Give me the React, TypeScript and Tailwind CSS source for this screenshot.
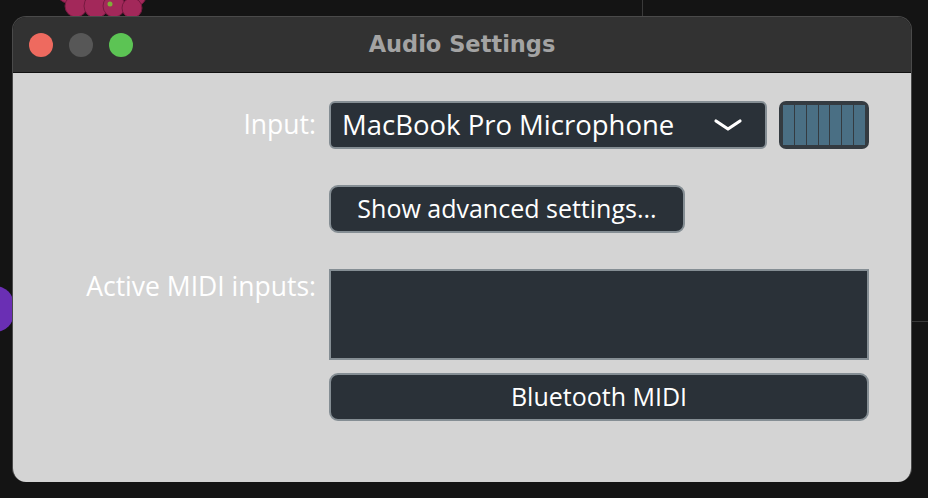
import React from 'react';

const labelFont = { fontFamily: '"Open Sans", "DejaVu Sans", sans-serif' };

function TrafficLights() {
  return (
    <div className="flex items-center gap-4 pl-4">
      <span className="block w-6 h-6 rounded-full bg-[#ee6a5f]" />
      <span className="block w-6 h-6 rounded-full bg-[#575757]" />
      <span className="block w-6 h-6 rounded-full bg-[#5cc454]" />
    </div>
  );
}

function Chevron() {
  return (
    <svg width="30" height="16" viewBox="0 0 30 16" fill="none">
      <path d="M3 4 L15 12 L27 4" stroke="#ffffff" strokeWidth="3.2" strokeLinecap="round" strokeLinejoin="round" />
    </svg>
  );
}

function LevelMeter() {
  return (
    <div className="flex h-12 w-[90px] rounded-[7px] bg-[#343b41] p-[4px] gap-[1px]">
      {Array.from({ length: 7 }).map((_, i) => (
        <div key={i} className="flex-1 bg-[#4a6f84]" />
      ))}
    </div>
  );
}

function Grapes() {
  const balls = [
    [10, 8, 11], [28, 6, 12], [46, 8, 11], [62, 6, 11], [78, 12, 10],
    [18, 22, 11], [38, 22, 12], [56, 22, 11], [74, 24, 10],
  ];
  return (
    <svg width="90" height="36" viewBox="0 0 90 36">
      {balls.map(([cx, cy, r], i) => (
        <circle key={i} cx={cx} cy={cy} r={r} fill="#a3285a" stroke="#761a40" strokeWidth="1" />
      ))}
      <circle cx="52" cy="20" r="2.5" fill="#7fae3a" />
    </svg>
  );
}

export default function App() {
  return (
    <div className="relative w-[928px] h-[498px] bg-[#141414] overflow-hidden">
      {/* background bits behind the window */}
      <div className="absolute left-[58px] -top-[16px]">
        <Grapes />
      </div>
      <div className="absolute left-[642px] top-0 w-px h-4 bg-[#3a3a3a]" />
      <div className="absolute left-[912px] top-[321px] w-4 h-px bg-[#3a3a3a]" />
      <div className="absolute -left-[24px] top-[286px] w-[38px] h-[46px] rounded-full bg-[#6a2fb4]" />

      {/* window */}
      <div className="absolute left-[12px] top-[16px] w-[900px] h-[466px] rounded-[14px] overflow-hidden flex flex-col border border-[#4a4a4a] border-b-0">
        <div className="relative h-[56px] bg-[#323232] border-b border-[#111111] flex items-center shrink-0">
          <TrafficLights />
          <div
            className="absolute inset-0 flex items-center justify-center text-[22.5px] font-bold text-[#a3a3a3]"
            style={{ fontFamily: '"DejaVu Sans", sans-serif' }}
          >
            Audio Settings
          </div>
        </div>

        <div className="flex-1 bg-[#d4d4d4] pt-[28px]" style={labelFont}>
          <div className="grid grid-cols-[303px_1fr] gap-x-[13px] text-[26.5px] text-white">
            {/* Input row */}
            <div className="flex items-center justify-end h-12">Input:</div>
            <div className="flex items-center gap-3">
              <div className="flex items-center justify-between w-[438px] h-12 rounded-[6px] bg-[#2a3138] border-2 border-[#858e94] pl-[11px] pr-[22px] text-[27.5px] font-medium">
                <span>MacBook Pro Microphone</span>
                <Chevron />
              </div>
              <LevelMeter />
            </div>

            {/* advanced settings */}
            <div />
            <div className="pt-[36px]">
              <div className="flex items-center justify-center w-[356px] h-12 rounded-[9px] bg-[#2a3138] border-2 border-[#858e94] text-[25px] font-medium">
                Show advanced settings...
              </div>
            </div>

            {/* MIDI inputs */}
            <div className="flex justify-end pt-[36px] leading-[34px]">Active MIDI inputs:</div>
            <div className="pt-[36px] flex flex-col gap-[13px] w-[540px]">
              <div className="h-[91px] bg-[#2a3138] border-2 border-[#858e94]" />
              <div className="flex items-center justify-center h-12 rounded-[9px] bg-[#2a3138] border-2 border-[#858e94] text-[25px] font-medium">
                Bluetooth MIDI
              </div>
            </div>
          </div>
        </div>
      </div>
    </div>
  );
}
